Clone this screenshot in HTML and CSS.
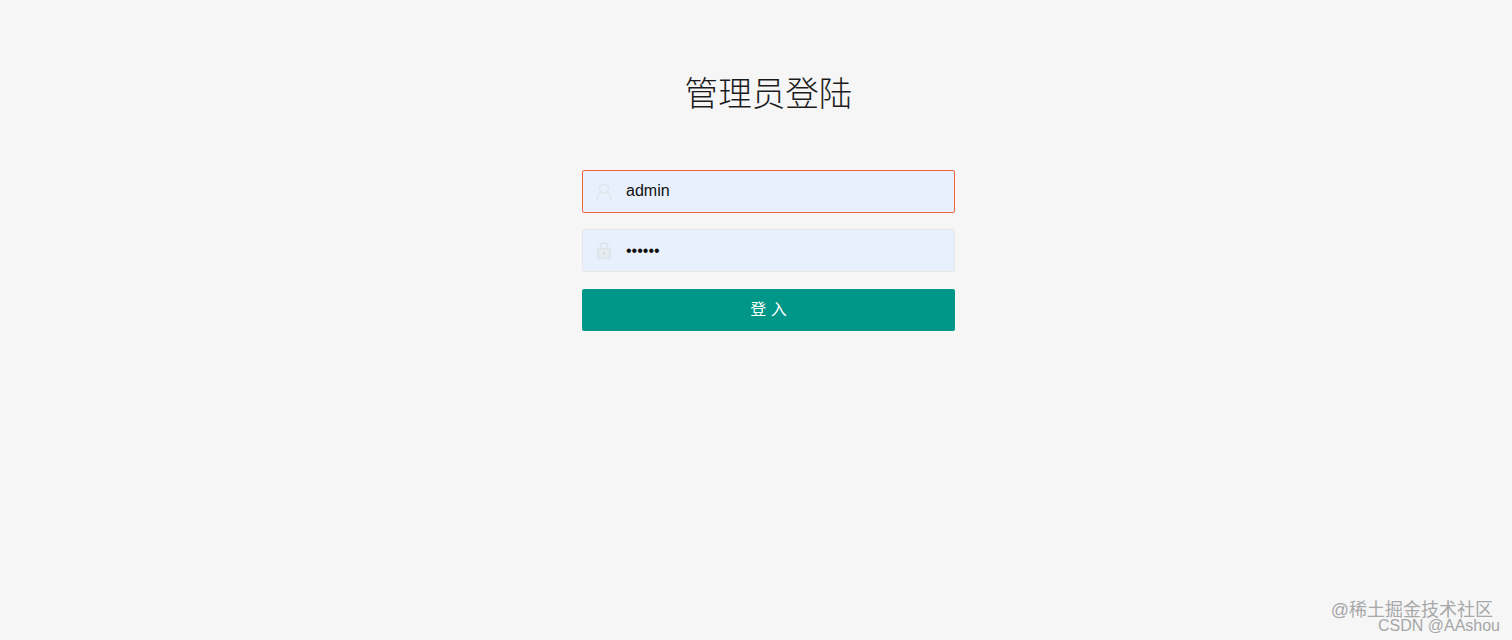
FILE: index.html
```html
<!DOCTYPE html>
<html lang="zh-CN">
	<head>
		<meta charset="UTF-8" />
		<meta name="viewport" content="width=device-width, initial-scale=1.0" />
		<title>管理员登陆</title>
		<link rel="stylesheet" href="styles.css">
	</head>
	<body>
		<div class="login">
			<h1 class="title">管理员登陆</h1>
			<form class="login-form">
				<div class="field field-error">
					<svg class="field-icon" viewBox="0 0 16 17" fill="none" stroke="#e0e5ea" stroke-width="1.4">
						<circle cx="8" cy="5.6" r="4.4" />
						<path d="M5.4 9.2C3 10.4 1.4 13 1 16.5M10.6 9.2c2.4 1.2 4 3.8 4.4 7.3" />
					</svg>
					<input class="field-input" type="text" value="admin">
				</div>
				<div class="field">
					<svg class="field-icon" viewBox="0 0 16 17" fill="#e6ebf0" stroke="#dde3ea" stroke-width="1.6">
						<path d="M4.5 6.5V2.6c0-.8.6-1.4 1.4-1.4h4.2c.8 0 1.4.6 1.400 1.400v3.900" fill="none" />
						<rect x="1.8" y="6.500" width="12.4" height="9.7" />
						<path d="M8 10.500v2" stroke="#c9d0d8" />
					</svg>
					<input class="field-input field-pass" type="password" value="123456">
				</div>
				<button class="login-btn" type="button">登 入</button>
			</form>
		</div>
		<div class="watermark">
			<div class="mark-juejin">@稀土掘金技术社区</div>
			<div class="mark-csdn">CSDN @AAshou</div>
		</div>
	</body>
</html>
```

FILE: styles.css
```css
body {
	display: flex;
	justify-content: center;
	box-sizing: border-box;
	margin: 0;
	padding-left: 25px;
	height: 640px;
	overflow: hidden;
	background-color: #f6f6f6;
	font-family: "Liberation Sans", "Noto Sans CJK SC", sans-serif;
}
.login {
	width: 373px;
	padding-top: 71px;
}
.title {
	margin: 0 0 52px;
	height: 47px;
	line-height: 47px;
	font-size: 33.6px;
	font-weight: 300;
	text-align: center;
	color: #1c1c1c;
}
.login-form {
	display: flex;
	flex-direction: column;
	gap: 16px;
}
.field {
	display: flex;
	align-items: center;
	box-sizing: border-box;
	height: 43px;
	padding-left: 13px;
	background-color: #e8f0fe;
	border: 1px solid #e6e6e6;
	border-radius: 2px;
}
.field-error {
	border-color: #f0673e;
}
.field-icon {
	flex: none;
	width: 16px;
	height: 17px;
}
.field-input {
	flex: 1;
	min-width: 0;
	height: 40px;
	margin-left: 14px;
	margin-bottom: 2px;
	padding: 0;
	border: 0;
	outline: 0;
	background: transparent;
	font-family: inherit;
	font-size: 16px;
	color: #111;
}
.field-pass {
	margin-bottom: 0;
}
.login-btn {
	height: 42px;
	margin-top: 1px;
	padding-bottom: 5px;
	border: 0;
	border-radius: 2px;
	background-color: #009688;
	color: #fff;
	font-family: inherit;
	font-size: 16px;
}
.watermark {
	position: absolute;
	right: 12px;
	bottom: 5px;
	text-align: right;
	line-height: 19px;
}
.mark-juejin {
	font-size: 18px;
	margin-right: 7px;
	margin-bottom: -4px;
	color: #a8a8a8;
}
.mark-csdn {
	font-size: 16px;
	color: #a6a6a6;
}
```
